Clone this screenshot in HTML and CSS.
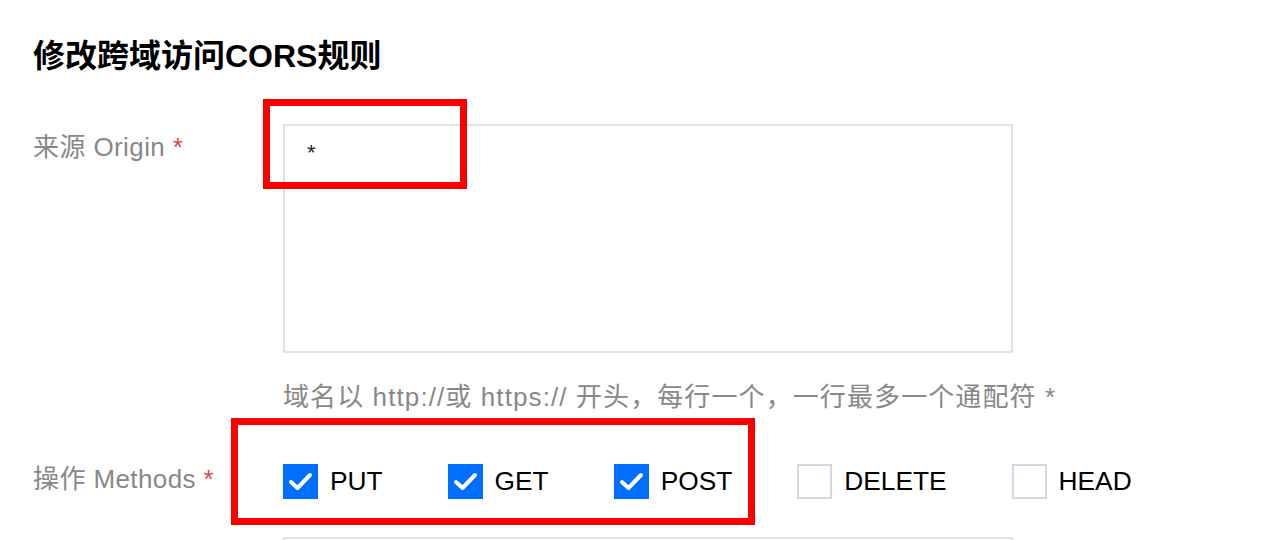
FILE: index.html
```html
<!DOCTYPE html>
<html lang="zh-CN">
<head>
<meta charset="utf-8">
<title>修改跨域访问CORS规则</title>
<link rel="stylesheet" href="styles.css">
</head>
<body>
<div class="page">
  <h1 class="title">修改跨域访问CORS规则</h1>

  <div class="row row-origin">
    <div class="label">来源 Origin <span class="req">*</span></div>
    <div class="field">
      <div class="textarea">*</div>
      <div class="mark mark-origin"></div>
      <div class="hint">域名以 http://或 https:// 开头，每行一个，一行最多一个通配符 *</div>
    </div>
  </div>

  <div class="row row-methods">
    <div class="label">操作 Methods <span class="req">*</span></div>
    <div class="field">
      <div class="checks">
        <label class="check"><span class="box on"><svg viewBox="0 0 35 35"><polyline points="8,18 14.5,24 27,11" /></svg></span>PUT</label>
        <label class="check"><span class="box on"><svg viewBox="0 0 35 35"><polyline points="8,18 14.5,24 27,11" /></svg></span>GET</label>
        <label class="check"><span class="box on"><svg viewBox="0 0 35 35"><polyline points="8,18 14.5,24 27,11" /></svg></span>POST</label>
        <label class="check"><span class="box"></span>DELETE</label>
        <label class="check"><span class="box"></span>HEAD</label>
      </div>
      <div class="mark mark-methods"></div>
    </div>
  </div>

  <div class="row row-next">
    <div class="label"></div>
    <div class="field">
      <div class="textarea textarea-next"></div>
    </div>
  </div>
</div>
</body>
</html>
```

FILE: styles.css
```css
html, body {
  margin: 0;
  padding: 0;
  background: #fff;
  overflow: hidden;
}
body {
  font-family: "Liberation Sans", Arial, "Noto Sans CJK SC", sans-serif;
  color: #000;
}
.page {
  padding: 35px 0 0 33px;
}
.title {
  margin: 0;
  font-size: 32px;
  line-height: 42px;
  font-weight: bold;
  color: #000;
}
.row {
  display: grid;
  grid-template-columns: 250px 730px;
}
.row-origin {
  margin-top: 47px;
}
.label {
  font-size: 26px;
  letter-spacing: 0.4px;
  line-height: 46px;
  color: #888;
}
.req {
  color: #e54545;
}
.field {
  position: relative;
}
.textarea {
  box-sizing: border-box;
  height: 229px;
  border: 2px solid #e2e2e2;
  padding: 12px 0 0 22px;
  font-size: 22px;
  line-height: 30px;
  color: #222;
}
.hint {
  margin-top: 28px;
  font-size: 26px;
  letter-spacing: 1.1px;
  line-height: 32px;
  color: #888;
  white-space: nowrap;
}
.mark {
  position: absolute;
  border: 7px solid #ff0000;
  box-sizing: border-box;
}
.mark-origin {
  left: -20px;
  top: -25px;
  width: 204px;
  height: 90px;
}
.row-methods {
  margin-top: 42px;
  height: 50px;
}
.row-methods .label {
  line-height: 48px;
}
.checks {
  display: flex;
  align-items: center;
  gap: 65px;
  height: 52px;
}
.check {
  display: flex;
  align-items: center;
  gap: 12px;
  font-size: 26.3px;
  color: #000;
}
.box {
  box-sizing: border-box;
  width: 35px;
  height: 35px;
  border: 2px solid #d3d9e4;
  background: #fff;
  display: flex;
}
.box.on {
  border: none;
  background: #006eff;
}
.box svg {
  width: 35px;
  height: 35px;
}
.box polyline {
  fill: none;
  stroke: #fff;
  stroke-width: 4;
  stroke-linecap: round;
  stroke-linejoin: round;
}
.mark-methods {
  left: -52px;
  top: -37px;
  width: 524px;
  height: 107px;
}
.row-next {
  margin-top: 32px;
}
.textarea-next {
  height: 100px;
}
```
